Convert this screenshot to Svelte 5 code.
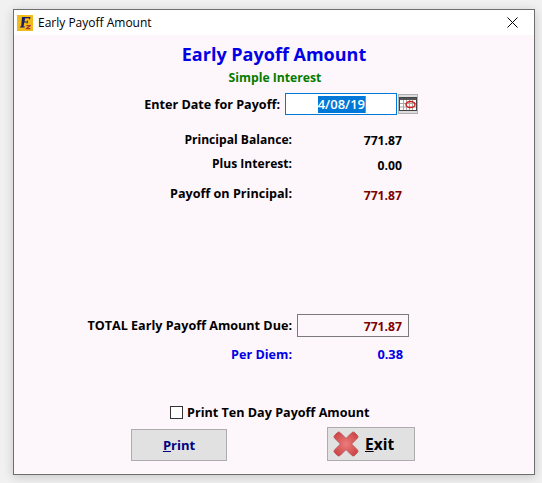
<script>
	let tenDay = $state(false);

	const topRows = [
		{ label: 'Principal Balance:', value: '771.87', cls: 'row-principal small' },
		{ label: 'Plus Interest:', value: '0.00', cls: 'row-interest small' },
		{ label: 'Payoff on Principal:', value: '771.87', cls: 'row-payoff maroon' }
	];
</script>

<div class="desktop">
	<div class="window">
		<div class="titlebar">
			<svg class="app-icon" width="16" height="16" viewBox="0 0 16 16" aria-hidden="true">
				<rect width="16" height="16" fill="#eab71a" />
				<path d="M1 0h14l1 1v14l-1 1H1l-1-1V1z" fill="#f0bc1c" />
				<path d="M5 2h8.500l-.5 2.200h-1l.1-1H8.200L7.500 6.500h2.600l.2-.9h.8l-.6 3h-.8l.2-1H7.200L6.500 11.500h1.300l-.2 1H2.800l.2-1h1.200z" fill="#1a1a66" />
				<path d="M9.500 10h4.500l-.2 1.100-2.700 2h2.400l-.2 1.200H8.700l.2-1.100 2.700-2H9.300z" fill="#a4343e" />
			</svg>
			<span class="title-text">Early Payoff Amount</span>
			<svg class="close" width="11" height="11" viewBox="0 0 11 11" aria-hidden="true">
				<path d="M.5.5l10 10M10.500.5l-10 10" stroke="#000" stroke-width="1" fill="none" />
			</svg>
		</div>

		<div class="content">
			<h1>Early Payoff Amount</h1>
			<div class="subtitle">Simple Interest</div>

			<div class="date-row">
				<span class="label">Enter Date for Payoff:</span>
				<div class="date-input"><span class="selected">4/08/19</span><i class="caret"></i></div>
				<svg class="cal" width="20" height="20" viewBox="0 0 20 20" aria-hidden="true">
					<rect x=".5" y=".5" width="19" height="19" fill="#dcdcdc" stroke="#b0b0b0" />
					<rect x="1.500" y="3.500" width="17" height="13" fill="#fff" stroke="#444" />
					<rect x="2" y="4" width="16" height="2" fill="#555" />
					<path d="M5.500 6v10M8.500 6v10M11.500 6v10M14.500 6v10M2 9.500h16M2 13h16" stroke="#a8a8a8" stroke-width="1" />
					<ellipse cx="12.500" cy="10.500" rx="4.500" ry="3" fill="none" stroke="#d01818" stroke-width="1.400" />
				</svg>
			</div>

			{#each topRows as row}
				<div class="row {row.cls}">
					<span class="label">{row.label}</span>
					<span class="value">{row.value}</span>
				</div>
			{/each}

			<div class="row row-total">
				<span class="label">TOTAL Early Payoff Amount Due:</span>
				<span class="total-box">771.87</span>
			</div>
			<div class="row row-diem">
				<span class="label">Per Diem:</span>
				<span class="value">0.38</span>
			</div>

			<label class="check">
				<input type="checkbox" bind:checked={tenDay} />
				<span>Print Ten Day Payoff Amount</span>
			</label>

			<div class="buttons">
				<button class="btn print"><span><u>P</u>rint</span></button>
				<button class="btn exit">
					<svg width="28" height="28" viewBox="0 0 28 28" aria-hidden="true">
						<defs>
							<radialGradient id="xfill" cx="50%" cy="50%" r="55%">
								<stop offset="0" stop-color="#ee7c7c" />
								<stop offset="1" stop-color="#cf4848" />
							</radialGradient>
						</defs>
						<path d="M5.500 2.500Q6.500 1.500 8 2.500L14 8.500l6-6Q21.500 1.500 22.500 2.500l3 3Q26.500 6.500 25.500 8l-6 6 6 6Q26.500 21.500 25.500 22.500l-3 3Q21.500 26.500 20 25.500l-6-6-6 6Q6.500 26.500 5.500 25.500l-3-3Q1.500 21.500 2.500 20l6-6-6-6Q1.500 6.500 2.500 5.500z" fill="url(#xfill)" stroke="#b8585a" stroke-width="1" />
					</svg>
					<span><u>E</u>xit</span>
				</button>
			</div>
		</div>
	</div>
</div>

<style>
	:global(body) {
		margin: 0;
		background: #f3f3f3;
	}

	.desktop {
		width: 542px;
		height: 483px;
		box-sizing: border-box;
		padding: 9px 7px 8px 13px;
		overflow: hidden;
		background: #f1f1f1;
		font-family: "Open Sans", "Noto Sans", sans-serif;
	}

	.window {
		height: 100%;
		box-sizing: border-box;
		border: 1px solid #6e6e6e;
		background: #fdf6fb;
		box-shadow: 0 2px 10px rgba(0, 0, 0, 0.18);
		display: flex;
		flex-direction: column;
	}

	.titlebar {
		height: 25px;
		flex: none;
		background: #fff;
		display: flex;
		align-items: center;
		padding: 0 16px 0 3px;
		font-size: 12px;
		color: #000;
	}

	.title-text {
		margin-left: 5px;
		flex: 1;
	}

	.content {
		flex: 1;
		display: flex;
		flex-direction: column;
		font-weight: 700;
		font-size: 12.6px;
		color: #000;
	}

	h1 {
		margin: 7px 0 0;
		height: 24px;
		line-height: 24px;
		font-size: 18px;
		font-weight: 700;
		color: #0000e6;
		text-align: center;
	}

	.subtitle {
		margin-top: 3px;
		height: 18px;
		line-height: 18px;
		font-size: 12.2px;
		color: #007c00;
		text-align: center;
		padding-left: 2px;
	}

	.label {
		width: 278px;
		text-align: right;
		flex: none;
		white-space: nowrap;
		box-sizing: border-box;
	}

	.small .label {
		font-size: 12.1px;
	}

	.date-row {
		margin-top: 5px;
		display: flex;
		align-items: center;
		height: 24px;
	}

	.date-row .label {
		width: 266px;
	}

	.date-input {
		margin-left: 5px;
		width: 112px;
		height: 22px;
		box-sizing: border-box;
		border: 1px solid #0078d7;
		background: #fff;
		display: flex;
		align-items: center;
		justify-content: flex-end;
		padding-right: 30px;
		font-size: 13px;
		font-weight: 600;
	}

	.selected {
		background: #0078d7;
		color: #fff;
		line-height: 17px;
		height: 17px;
	}

	.caret {
		width: 1px;
		height: 17px;
		background: #e87a10;
	}

	.cal {
		margin-left: 1px;
	}

	.row {
		display: flex;
		align-items: center;
		height: 20px;
	}

	.value {
		width: 110px;
		flex: none;
		text-align: right;
		font-size: 12.2px;
		padding-top: 2px;
	}

	.row-principal {
		margin-top: 13px;
	}

	.row-interest {
		margin-top: 4px;
	}

	.row-interest .value,
	.row-payoff .value {
		padding-top: 4px;
	}

	.row-payoff {
		margin-top: 10px;
	}

	.maroon .value,
	.total-box {
		color: #800000;
	}

	.row-total {
		margin-top: 110px;
		height: 24px;
	}

	.total-box {
		margin-left: 5px;
		width: 112px;
		height: 23px;
		box-sizing: border-box;
		border: 1px solid #7a7a7a;
		padding-right: 6px;
		text-align: right;
		line-height: 23px;
		font-size: 12.2px;
	}

	.row-diem {
		margin-top: 7px;
		color: #0000e6;
	}

	.row-diem .value {
		font-size: 12.8px;
		padding-top: 0;
		width: 111px;
	}

	.check {
		margin-top: 38px;
		height: 20px;
		display: flex;
		align-items: center;
		padding-left: 156px;
	}

	.check input {
		appearance: none;
		width: 13px;
		height: 13px;
		margin: 0 4px 0 0;
		background: #fff;
		border: 1px solid #333;
	}

	.buttons {
		display: flex;
		align-items: flex-start;
		margin-top: 5px;
		padding-left: 117px;
	}

	.btn {
		font: inherit;
		font-size: 13px;
		background: #e1e1e1;
		border: 1px solid #adadad;
		padding: 0;
		display: flex;
		align-items: center;
		justify-content: center;
	}

	.print {
		width: 96px;
		height: 32px;
		margin-top: 2px;
		color: #000080;
	}

	.exit {
		width: 88px;
		height: 34px;
		margin-left: 100px;
		color: #000;
		font-size: 15.5px;
		justify-content: flex-start;
		padding-left: 4px;
		gap: 5px;
	}
</style>
